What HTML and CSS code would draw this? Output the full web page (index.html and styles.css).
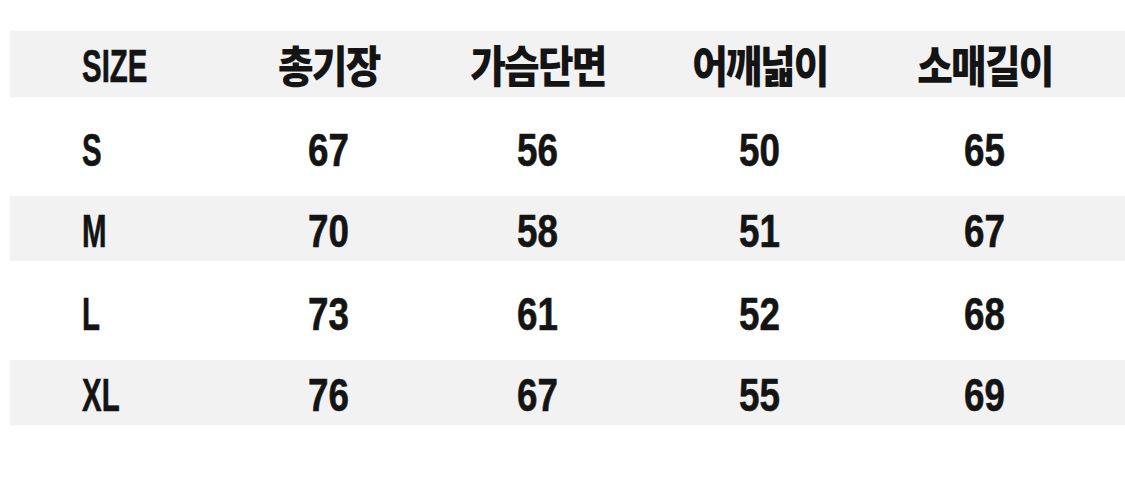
FILE: index.html
```html
<!DOCTYPE html>
<html lang="ko">
<head>
<meta charset="utf-8">
<title>Size chart</title>
<link rel="stylesheet" href="styles.css">
</head>
<body>
<div class="chart">
  <div class="row head shade">
    <div class="cell label"><span class="lab">SIZE</span></div>
    <div class="cell"><span class="ko">총기장</span></div>
    <div class="cell"><span class="ko">가슴단면</span></div>
    <div class="cell"><span class="ko">어깨넓이</span></div>
    <div class="cell"><span class="ko">소매길이</span></div>
    <div class="cell"></div>
  </div>
  <div class="row tall">
    <div class="cell label"><span class="lab">S</span></div>
    <div class="cell"><span class="num">67</span></div>
    <div class="cell"><span class="num">56</span></div>
    <div class="cell"><span class="num">50</span></div>
    <div class="cell"><span class="num">65</span></div>
    <div class="cell"></div>
  </div>
  <div class="row shade">
    <div class="cell label"><span class="lab">M</span></div>
    <div class="cell"><span class="num">70</span></div>
    <div class="cell"><span class="num">58</span></div>
    <div class="cell"><span class="num">51</span></div>
    <div class="cell"><span class="num">67</span></div>
    <div class="cell"></div>
  </div>
  <div class="row tall">
    <div class="cell label"><span class="lab">L</span></div>
    <div class="cell"><span class="num">73</span></div>
    <div class="cell"><span class="num">61</span></div>
    <div class="cell"><span class="num">52</span></div>
    <div class="cell"><span class="num">68</span></div>
    <div class="cell"></div>
  </div>
  <div class="row shade">
    <div class="cell label"><span class="lab">XL</span></div>
    <div class="cell"><span class="num">76</span></div>
    <div class="cell"><span class="num">67</span></div>
    <div class="cell"><span class="num">55</span></div>
    <div class="cell"><span class="num">69</span></div>
    <div class="cell"></div>
  </div>
</div>
</body>
</html>
```

FILE: styles.css
```css
html, body {
  margin: 0;
  padding: 0;
  background: #ffffff;
}

body {
  width: 1125px;
  height: 504px;
  overflow: hidden;
}

.chart {
  padding: 31px 0 0 10px;
  display: flex;
  flex-direction: column;
}

.row {
  display: grid;
  grid-template-columns: 214px 210px 208px 236px 214px 1fr;
  align-items: center;
  height: 65px;
  padding-top: 4px;
  box-sizing: border-box;
}

.row.head {
  height: 66px;
  padding-top: 4px;
}

.row.tall {
  height: 99px;
  padding-top: 6px;
}

.shade {
  background: #f2f2f2;
}

.cell {
  font-family: "Liberation Sans", "Noto Sans CJK KR", sans-serif;
  font-weight: 700;
  font-size: 46px;
  color: #141414;
  text-align: center;
  line-height: 1;
}

.cell.label {
  text-align: left;
  padding-left: 72px;
}

.num {
  display: inline-block;
  transform: scaleX(0.8);
  -webkit-text-stroke: 0.6px #141414;
}

.lab {
  display: inline-block;
  transform: scaleX(0.64);
  transform-origin: left center;
  -webkit-text-stroke: 0.6px #141414;
}

.ko {
  display: inline-block;
  font-family: "Noto Sans CJK KR", sans-serif;
  font-weight: 900;
  font-size: 44px;
  letter-spacing: -2px;
  transform: scaleX(0.88);
}
```
